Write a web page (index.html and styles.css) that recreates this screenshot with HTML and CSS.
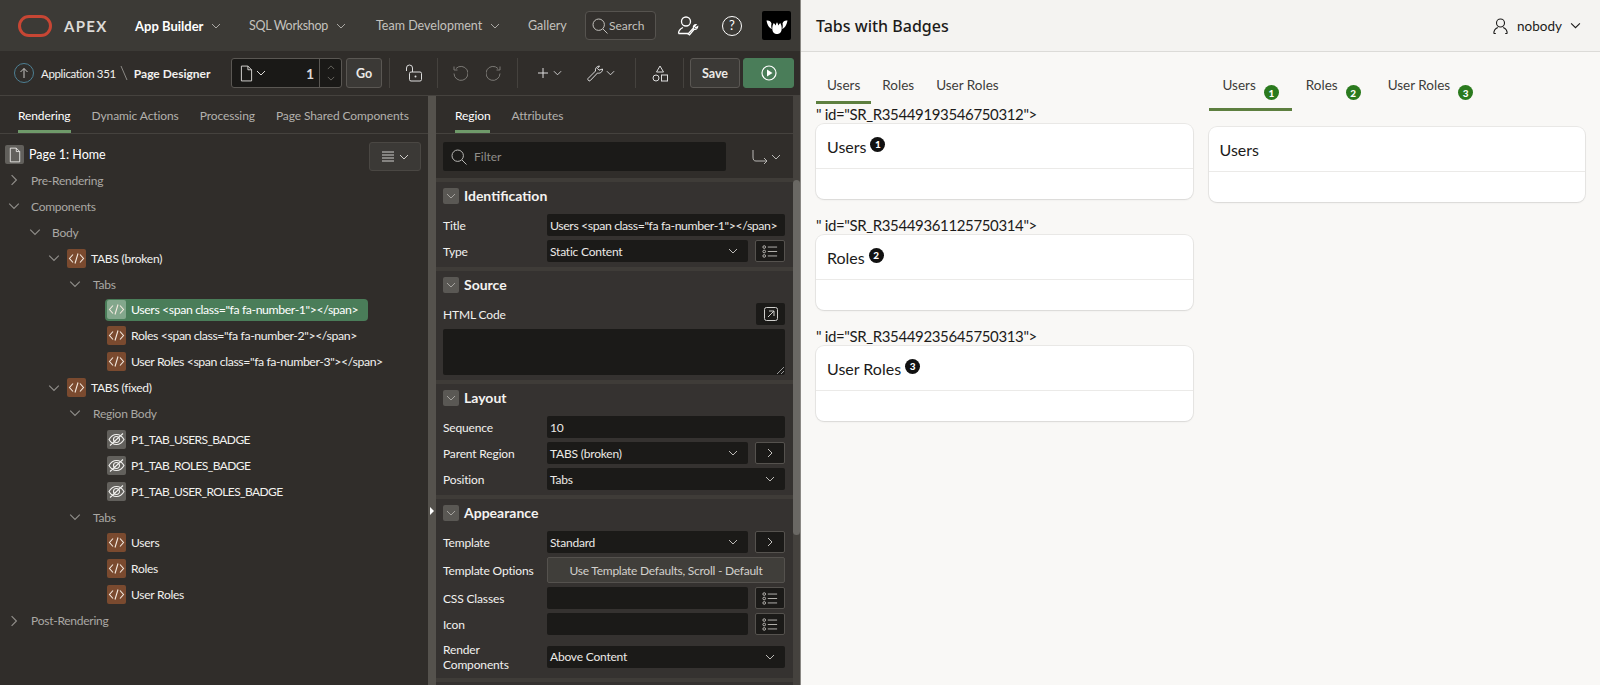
FILE: index.html
```html
<!DOCTYPE html>
<html lang="en">
<head>
<meta charset="utf-8">
<title>Tabs with Badges</title>
<link rel="stylesheet" href="styles.css">
</head>
<body>
<svg class="defs" width="0" height="0" aria-hidden="true">
  <symbol id="chev-d" viewBox="0 0 10 10"><path d="M1 3l4 4 4-4" fill="none" stroke="currentColor"/></symbol>
  <symbol id="chev-r" viewBox="0 0 10 10"><path d="M3 1l4 4-4 4" fill="none" stroke="currentColor"/></symbol>
  <symbol id="code" viewBox="0 0 19 19"><path d="M6 5.500L2.500 9.500 6 13.500M13 5.500l3.500 4-3.500 4M11 4.500L8 14.500" fill="none" stroke="currentColor" stroke-width="1.100"/></symbol>
  <symbol id="hidden" viewBox="0 0 19 19"><path d="M2 9.500c2-3.500 4.500-5 7.500-5s5.500 1.500 7.500 5c-2 3.500-4.500 5-7.500 5s-5.500-1.500-7.500-5zM6.500 9.500a3 3 0 0 0 6 0 3 3 0 0 0-6 0M3 15.500L16 3.500" fill="none" stroke="currentColor" stroke-width="1.100"/></symbol>
  <symbol id="list" viewBox="0 0 18 14"><circle cx="2.500" cy="2" r="1.500" fill="none" stroke="currentColor"/><circle cx="2.500" cy="7" r="1.500" fill="none" stroke="currentColor"/><circle cx="2.500" cy="12" r="1.500" fill="none" stroke="currentColor"/><path d="M6.500 2H17M6.500 7H17M6.500 12H17" stroke="currentColor"/></symbol>
  <symbol id="doc" viewBox="0 0 14 18"><path d="M1.500 1h7l4 4v12h-11zM8.500 1v4h4" fill="none" stroke="currentColor"/></symbol>
  <symbol id="search" viewBox="0 0 16 16"><circle cx="6.700" cy="6.700" r="5.700" fill="none" stroke="currentColor"/><path d="M11 11l4.500 4.500" stroke="currentColor"/></symbol>
</svg>

<div class="layout">
  <div class="builder">
    <header class="topbar">
      <svg class="oracle" width="34" height="22" viewBox="0 0 34 22"><rect x="1.500" y="1.500" width="31" height="19" rx="9.500" fill="none" stroke="#c74634" stroke-width="3"/></svg>
      <span class="apex">APEX</span>
      <nav class="nav">
        <a class="nav-item nav-app active">App Builder<svg class="nav-chev"><use href="#chev-d"/></svg></a>
        <a class="nav-item nav-sql">SQL Workshop<svg class="nav-chev"><use href="#chev-d"/></svg></a>
        <a class="nav-item nav-team">Team Development<svg class="nav-chev"><use href="#chev-d"/></svg></a>
        <a class="nav-item nav-gal">Gallery</a>
      </nav>
      <div class="search"><svg class="search-icon"><use href="#search"/></svg><span>Search</span></div>
      <svg class="admin-icon" width="22" height="22" viewBox="0 0 22 22"><circle cx="9" cy="6.500" r="4.500" fill="none" stroke="#fff" stroke-width="1.300"/><path d="M1.500 18.500c0-3.500 2.500-5 4.500-6M1.500 18.500h9.500" fill="none" stroke="#fff" stroke-width="1.300"/><path d="M11 19l5.500-6c-.6-1.800.6-3.500 2.500-3.500l-1.500 2 1.200 1.300 2-1.200c0 2-1.700 3.200-3.500 2.700l-4.700 5.700z" fill="none" stroke="#fff" stroke-width="1.200"/></svg>
      <div class="help">?</div>
      <div class="tenant"><svg width="22" height="18" viewBox="0 0 22 18"><path d="M11 17c-3 0-4.700-2.200-4.700-5.500 0-2 .5-4 1.500-5.500.8.700 1.500 1.500 1.900 2.500.2-1.200.6-2.300 1.300-3.200.7.900 1.100 2 1.300 3.200.4-1 1.100-1.800 1.900-2.500 1 1.500 1.500 3.500 1.500 5.500 0 3.300-1.700 5.500-4.700 5.500z" fill="#fff"/><path d="M.5 3.500C3 3 4.800 4.300 5.500 6.500c-.5 2-.3 4 .4 5.500C3 11 1.300 7.500.5 3.500zM21.500 3.500C19 3 17.200 4.300 16.500 6.500c.5 2 .3 4-.4 5.500 2.900-1 4.600-4.500 5.400-8.500z" fill="#fff"/></svg></div>
    </header>

    <div class="toolbar">
      <div class="crumbs">
        <span class="up"><svg width="12" height="12" viewBox="0 0 12 12"><path d="M6 11V1.500M2.500 5L6 1.500 9.500 5" fill="none" stroke="#c9c8c5"/></svg></span>
        <span class="crumb crumb-app">Application 351</span>
        <svg class="crumb-sep" width="8" height="16" viewBox="0 0 8 16"><path d="M1 1l6 14" stroke="#8a8884"/></svg>
        <strong class="crumb">Page Designer</strong>
      </div>
      <div class="page-sel">
        <svg class="ps-doc"><use href="#doc"/></svg>
        <svg class="ps-chev"><use href="#chev-d"/></svg>
        <span class="ps-num">1</span>
        <span class="ps-spin"><svg class="spin-i" viewBox="0 0 10 6"><path d="M1 5l4-4 4 4" fill="none" stroke="currentColor"/></svg><svg class="spin-i" viewBox="0 0 10 6"><path d="M1 1l4 4 4-4" fill="none" stroke="currentColor"/></svg></span>
      </div>
      <button class="btn go">Go</button>
      <i class="sep s7"></i>
      <svg class="tool ml15" width="17" height="18" viewBox="0 0 17 18"><path d="M1.500 7V4a3 3 0 0 1 6 0v4" fill="none" stroke="#ddd"/><rect x="4.500" y="8" width="12" height="9" rx="1.500" fill="none" stroke="#ddd"/><circle cx="10.500" cy="12.500" r="1" fill="#ddd"/></svg>
      <i class="sep ml15"></i>
      <svg class="tool ml15" width="15" height="16" viewBox="0 0 15 16"><path d="M3 3.500a7 7 0 1 1-2 5M1 1.500v3.500h3.500" fill="none" stroke="#7b7975"/></svg>
      <svg class="tool ml18" width="15" height="16" viewBox="0 0 15 16"><path d="M12 3.500a7 7 0 1 0 2 5M14 1.500v3.500h-3.500" fill="none" stroke="#7b7975"/></svg>
      <i class="sep ml16"></i>
      <svg class="tool ml20" width="10" height="10" viewBox="0 0 10 10"><path d="M5 0v10M0 5h10" stroke="#ddd"/></svg>
      <svg class="tool-chev ml5"><use href="#chev-d"/></svg>
      <svg class="tool ml25" width="17" height="17" viewBox="0 0 17 17"><path d="M1 13.500L8.500 6c-.6-2.500 1.200-5 4-5l-2 2.500 1.500 1.700L15.500 4c.3 2.800-2.500 4.800-5 4L3 15.800c-1 .8-2.800-1.200-2-2.300z" fill="none" stroke="#ddd"/></svg>
      <svg class="tool-chev ml2"><use href="#chev-d"/></svg>
      <i class="sep ml20"></i>
      <svg class="tool ml16" width="16" height="17" viewBox="0 0 16 17"><path d="M8 1l3.500 6h-7z" fill="none" stroke="#ddd"/><circle cx="4" cy="13" r="3" fill="none" stroke="#ddd"/><rect x="9.500" y="10" width="6" height="6" fill="none" stroke="#ddd"/></svg>
      <i class="sep ml15"></i>
      <button class="btn save">Save</button>
      <button class="btn run"><svg width="16" height="16" viewBox="0 0 16 16"><circle cx="8" cy="8" r="7" fill="none" stroke="#fff" stroke-width="1.200"/><path d="M6 4.500l5.500 3.500L6 11.500z" fill="#fff"/></svg></button>
    </div>

    <div class="panes">
      <section class="pane-left">
        <div class="ptabs ptabs-left">
          <span class="ptab on">Rendering</span>
          <span class="ptab">Dynamic Actions</span>
          <span class="ptab">Processing</span>
          <span class="ptab">Page Shared Components</span>
        </div>
        <div class="tree-wrap">
          <div class="tree-head">
            <span class="pg-icon"><svg class="pg-doc"><use href="#doc"/></svg></span>
            <span class="tree-page">Page 1: Home</span>
            <button class="tree-menu"><svg width="14" height="11" viewBox="0 0 14 11"><path d="M1 1h12M1 4h12M1 7h12M1 10h12" stroke="#d0cfcc"/></svg><svg class="menu-chev"><use href="#chev-d"/></svg></button>
          </div>
          <ul class="tree">
            <li class="row l0"><svg class="tw"><use href="#chev-r"/></svg><span class="mut">Pre-Rendering</span></li>
            <li class="row l0"><svg class="tw"><use href="#chev-d"/></svg><span class="mut">Components</span></li>
            <li class="row l1"><svg class="tw"><use href="#chev-d"/></svg><span class="mut">Body</span></li>
            <li class="row l2"><svg class="tw"><use href="#chev-d"/></svg><span class="ico code"><svg><use href="#code"/></svg></span><span>TABS (broken)</span></li>
            <li class="row l3"><svg class="tw"><use href="#chev-d"/></svg><span class="mut">Tabs</span></li>
            <li class="row l4"><span class="node sel"><span class="ico sel-ico"><svg><use href="#code"/></svg></span><span class="markup">Users &lt;span class="fa fa-number-1"&gt;&lt;/span&gt;</span></span></li>
            <li class="row l4"><span class="node"><span class="ico code"><svg><use href="#code"/></svg></span><span class="markup">Roles &lt;span class="fa fa-number-2"&gt;&lt;/span&gt;</span></span></li>
            <li class="row l4"><span class="node"><span class="ico code"><svg><use href="#code"/></svg></span><span class="markup">User Roles &lt;span class="fa fa-number-3"&gt;&lt;/span&gt;</span></span></li>
            <li class="row l2"><svg class="tw"><use href="#chev-d"/></svg><span class="ico code"><svg><use href="#code"/></svg></span><span>TABS (fixed)</span></li>
            <li class="row l3"><svg class="tw"><use href="#chev-d"/></svg><span class="mut">Region Body</span></li>
            <li class="row l4"><span class="node"><span class="ico hid"><svg><use href="#hidden"/></svg></span><span class="caps">P1_TAB_USERS_BADGE</span></span></li>
            <li class="row l4"><span class="node"><span class="ico hid"><svg><use href="#hidden"/></svg></span><span class="caps">P1_TAB_ROLES_BADGE</span></span></li>
            <li class="row l4"><span class="node"><span class="ico hid"><svg><use href="#hidden"/></svg></span><span class="caps">P1_TAB_USER_ROLES_BADGE</span></span></li>
            <li class="row l3"><svg class="tw"><use href="#chev-d"/></svg><span class="mut">Tabs</span></li>
            <li class="row l4"><span class="node"><span class="ico code"><svg><use href="#code"/></svg></span><span>Users</span></span></li>
            <li class="row l4"><span class="node"><span class="ico code"><svg><use href="#code"/></svg></span><span>Roles</span></span></li>
            <li class="row l4"><span class="node"><span class="ico code"><svg><use href="#code"/></svg></span><span>User Roles</span></span></li>
            <li class="row l0"><svg class="tw"><use href="#chev-r"/></svg><span class="mut">Post-Rendering</span></li>
          </ul>
        </div>
      </section>

      <div class="splitter"><i class="split-arrow"></i></div>

      <section class="pane-right">
        <div class="props">
          <div class="ptabs ptabs-right">
            <span class="ptab on">Region</span>
            <span class="ptab">Attributes</span>
          </div>
          <div class="filter-row">
            <div class="filter"><svg class="filter-icon"><use href="#search"/></svg><span>Filter</span></div>
            <svg class="goto" width="16" height="16" viewBox="0 0 16 16"><path d="M1 1v7c0 3 1 4 3 4h11M12 9l3 3-3 3" fill="none" stroke="#b9b8b5"/></svg>
            <svg class="goto-chev"><use href="#chev-d"/></svg>
          </div>

          <div class="group">
            <h3 class="group-head"><span class="coll"><svg><use href="#chev-d"/></svg></span>Identification</h3>
            <div class="group-body">
              <div class="prop"><label>Title</label><div class="field markup">Users &lt;span class="fa fa-number-1"&gt;&lt;/span&gt;</div></div>
              <div class="prop"><label>Type</label><div class="field sel-f">Static Content<svg class="dd"><use href="#chev-d"/></svg></div><span class="pick"><svg class="pick-i"><use href="#list"/></svg></span></div>
            </div>
          </div>

          <div class="group">
            <h3 class="group-head"><span class="coll"><svg><use href="#chev-d"/></svg></span>Source</h3>
            <div class="group-body">
              <div class="prop prop-code"><label>HTML Code</label><span class="expand"><svg width="14" height="14" viewBox="0 0 14 14"><rect x=".5" y=".5" width="13" height="13" rx="2" fill="none" stroke="#d0cfcc"/><path d="M4 10l6-6M5 4h5v5" fill="none" stroke="#d0cfcc"/></svg></span></div>
              <div class="textarea"><svg class="grip" width="7" height="7" viewBox="0 0 7 7"><path d="M0 7l7-7M4 7l3-3" stroke="#999"/></svg></div>
            </div>
          </div>

          <div class="group">
            <h3 class="group-head"><span class="coll"><svg><use href="#chev-d"/></svg></span>Layout</h3>
            <div class="group-body">
              <div class="prop"><label>Sequence</label><div class="field">10</div></div>
              <div class="prop"><label>Parent Region</label><div class="field sel-f">TABS (broken)<svg class="dd"><use href="#chev-d"/></svg></div><span class="pick"><svg class="pick-c"><use href="#chev-r"/></svg></span></div>
              <div class="prop"><label>Position</label><div class="field sel-f">Tabs<svg class="dd"><use href="#chev-d"/></svg></div></div>
            </div>
          </div>

          <div class="group">
            <h3 class="group-head"><span class="coll"><svg><use href="#chev-d"/></svg></span>Appearance</h3>
            <div class="group-body">
              <div class="prop"><label>Template</label><div class="field sel-f">Standard<svg class="dd"><use href="#chev-d"/></svg></div><span class="pick"><svg class="pick-c"><use href="#chev-r"/></svg></span></div>
              <div class="prop prop-opts"><label>Template Options</label><div class="opts">Use Template Defaults, Scroll - Default</div></div>
              <div class="prop"><label>CSS Classes</label><div class="field"></div><span class="pick"><svg class="pick-i"><use href="#list"/></svg></span></div>
              <div class="prop"><label>Icon</label><div class="field"></div><span class="pick"><svg class="pick-i"><use href="#list"/></svg></span></div>
              <div class="prop prop-two"><label>Render Components</label><div class="field sel-f">Above Content<svg class="dd"><use href="#chev-d"/></svg></div></div>
            </div>
          </div>
          <div class="group group-end"></div>
        </div>
        <div class="scrollbar"><i class="thumb"></i></div>
      </section>
    </div>
  </div>

  <div class="app">
    <header class="app-head">
      <h1>Tabs with Badges</h1>
      <div class="user">
        <svg width="15" height="16" viewBox="0 0 15 16"><circle cx="7.500" cy="5" r="4" fill="none" stroke="#1c1b1a" stroke-width="1.100"/><path d="M.8 15.500c0-3 1.500-5 4-6M14.200 15.500c0-3-1.500-5-4-6M.8 15.500h2M14.200 15.500h-2" fill="none" stroke="#1c1b1a" stroke-width="1.100"/></svg>
        <span>nobody</span>
        <svg class="user-chev"><use href="#chev-d"/></svg>
      </div>
    </header>
    <main class="app-body">
      <div class="col">
        <div class="tabs">
          <span class="tab on">Users</span>
          <span class="tab">Roles</span>
          <span class="tab">User Roles</span>
        </div>
        <div class="stray">" id="SR_R35449193546750312"&gt;</div>
        <article class="card">
          <div class="card-head"><h2>Users</h2><span class="num">1</span></div>
          <div class="card-body"></div>
        </article>
        <div class="stray">" id="SR_R35449361125750314"&gt;</div>
        <article class="card">
          <div class="card-head"><h2>Roles</h2><span class="num">2</span></div>
          <div class="card-body"></div>
        </article>
        <div class="stray">" id="SR_R35449235645750313"&gt;</div>
        <article class="card">
          <div class="card-head"><h2>User Roles</h2><span class="num">3</span></div>
          <div class="card-body"></div>
        </article>
      </div>
      <div class="col">
        <div class="tabs tabs-b">
          <span class="tab on">Users<span class="num green">1</span></span>
          <span class="tab">Roles<span class="num green">2</span></span>
          <span class="tab">User Roles<span class="num green">3</span></span>
        </div>
        <article class="card card-b">
          <div class="card-head"><h2>Users</h2></div>
          <div class="card-body"></div>
        </article>
      </div>
    </main>
  </div>
</div>
</body>
</html>
```

FILE: styles.css
```css
* { box-sizing: border-box; }
html, body { margin: 0; height: 100%; }
body { font-family: "Lato", "Noto Sans", sans-serif; font-size: 12px; background: #f9f8f6; overflow: hidden; }
.defs { position: absolute; }
h1, h2, h3, ul { margin: 0; padding: 0; font: inherit; list-style: none; }
button { font: inherit; }
svg { display: block; flex: none; }
i { display: block; }

.layout { display: flex; height: 685px; }
.builder { width: 801px; flex: none; display: flex; flex-direction: column; background: #302d2a; color: #f2f1ef; border-right: 1px solid #8a8884; overflow: hidden; }

/* top bar */
.topbar { height: 51px; flex: none; display: flex; align-items: center; padding-left: 18px; background: #3c3a36; }
.apex { margin-left: 12px; width: 71px; font-size: 15px; font-weight: 700; letter-spacing: 1.300px; color: #dcdad7; }
.nav { display: flex; }
.nav-item { display: flex; align-items: center; font-size: 12.500px; color: #c4c2be; }
.nav-app { width: 114px; font-size: 13px; } .nav-sql { width: 127px; letter-spacing: -.3px; } .nav-team { width: 152px; } .nav-gal { width: 57px; }
.nav-item.active { color: #fff; font-weight: 700; }
.nav-chev { width: 10px; height: 10px; margin-left: 8px; color: #aaa8a4; }
.search { width: 71px; height: 29px; display: flex; align-items: center; gap: 1px; padding-left: 6px; border: 1px solid #56534f; border-radius: 4px; background: #33302d; color: #c4c2be; }
.search-icon { width: 16px; height: 16px; color: #c4c2be; }
.admin-icon { margin-left: 21px; }
.help { width: 20px; height: 20px; margin-left: 23px; border: 1.200px solid #fff; border-radius: 50%; text-align: center; line-height: 17px; font-size: 13px; color: #fff; }
.tenant { width: 29px; height: 29px; margin-left: 20px; background: #000; border-radius: 2px; display: flex; align-items: center; justify-content: center; }
.oracle { flex: none; }

/* toolbar */
.toolbar { height: 45px; flex: none; display: flex; align-items: center; padding-left: 14px; background: #302d2a; border-bottom: 1px solid #45423e; }
.crumbs { width: 217px; flex: none; display: flex; align-items: center; }
.up { width: 20px; height: 20px; border: 1px solid #4d7f93; border-radius: 50%; display: flex; align-items: center; justify-content: center; margin-right: 7px; }
.crumb { font-size: 12px; color: #f2f1ef; }
.crumb-app { font-size: 11.500px; letter-spacing: -.35px; }
.crumb-sep { margin: 0 6px 0 4px; }
.page-sel { width: 111px; height: 30px; display: flex; align-items: center; background: #1a1917; border: 1px solid #5a5753; border-radius: 3px; padding-left: 8px; color: #dcdad7; position: relative; }
.ps-doc { width: 13px; height: 17px; }
.ps-chev { width: 10px; height: 10px; margin-left: 3px; }
.ps-num { flex: 1; text-align: right; font-size: 14px; font-weight: 700; padding-right: 3px; }
.ps-spin { width: 22px; height: 28px; border-left: 1px solid #5a5753; margin-left: 2px; display: flex; flex-direction: column; align-items: center; justify-content: center; gap: 6px; color: #77756f; }
.spin-i { width: 8px; height: 5px; }
.btn { height: 30px; border: 1px solid #5a5753; border-radius: 3px; background: #3b3936; color: #ece9e6; padding: 0; display: flex; align-items: center; justify-content: center; font-size: 12.500px; font-weight: 700; }
.go { width: 36px; margin-left: 4px; }
.save { width: 50px; margin-left: 6px; }
.run { width: 51px; margin-left: 3px; background: #4a7d59; border-color: #4a7d59; }
.sep { width: 1px; height: 30px; background: #45423e; flex: none; }
.s7 { margin-left: 7px; }
.ml2 { margin-left: 2px; } .ml5 { margin-left: 5px; } .ml15 { margin-left: 15px; } .ml16 { margin-left: 16px; } .ml18 { margin-left: 18px; } .ml20 { margin-left: 20px; } .ml25 { margin-left: 25px; }
.tool-chev { width: 9px; height: 10px; color: #ddd; }

/* panes */
.panes { flex: 1; display: flex; min-height: 0; }
.pane-left { width: 428px; flex: none; display: flex; flex-direction: column; }
.splitter { width: 8px; flex: none; background: #55524d; display: flex; align-items: flex-start; }
.split-arrow { width: 0; height: 0; margin-top: 411px; margin-left: 2px; border-left: 4px solid #fff; border-top: 4px solid transparent; border-bottom: 4px solid transparent; }
.pane-right { flex: 1; display: flex; min-width: 0; }
.props { flex: 1; min-width: 0; }
.scrollbar { width: 7px; flex: none; background: #45423e; padding-top: 84px; }
.thumb { height: 355px; background: #6a6864; border-radius: 4px; }

.ptabs { height: 38px; display: flex; gap: 21px; border-bottom: 1px solid #45423e; }
.ptabs-left { padding-left: 18px; }
.ptabs-right { padding-left: 19px; }
.ptab { height: 37px; padding-top: 11px; line-height: 18px; letter-spacing: -.1px; color: #b3b1ad; border-bottom: 3px solid transparent; white-space: nowrap; }
.ptab.on { color: #fff; border-bottom-color: #6f9a6a; }

/* tree */
.tree-wrap { padding: 8px 0 0; }
.tree-head { height: 29px; display: flex; align-items: center; padding-left: 5px; padding-right: 7px; }
.pg-icon { width: 19px; height: 19px; margin-top: -4px; background: #62605c; border-radius: 2px; display: flex; align-items: center; justify-content: center; color: #f2f1ef; }
.pg-doc { width: 12px; height: 16px; }
.tree-page { margin: -4px 0 0 5px; flex: 1; color: #fff; font-size: 12.500px; }
.tree-menu { width: 52px; height: 29px; background: #3b3936; border: 1px solid #4a4743; border-radius: 3px; display: flex; align-items: center; justify-content: center; gap: 4px; padding: 0; color: #d0cfcc; }
.menu-chev { width: 10px; height: 10px; }
.tree { margin-top: -3.500px; }
.row { height: 25.900px; display: flex; align-items: center; white-space: nowrap; letter-spacing: -.25px; color: #f2f1ef; }
.mut { color: #aaa8a4; }
.tw { width: 12px; height: 12px; color: #8f8d89; }
.l0 { padding-left: 8px; } .l0 .tw { margin-right: 11px; }
.l1 { padding-left: 29px; } .l1 .tw { margin-right: 11px; }
.l2 { padding-left: 48px; } .l2 .tw { margin-right: 7px; }
.l3 { padding-left: 69px; } .l3 .tw { margin-right: 12px; }
.l4 { padding-left: 105px; }
.ico { width: 19px; height: 19px; border-radius: 2px; margin-right: 5px; flex: none; }
.ico svg { width: 19px; height: 19px; color: #f4e9df; }
.code { background: #7a4a2f; }
.hid { background: #62605c; }
.hid svg { color: #f2f1ef; }
.node { display: inline-flex; align-items: center; height: 22px; padding: 0 8px 0 2px; border-radius: 4px; }
.sel { width: 263px; background: #4a7d59; color: #fff; }
.sel-ico { background: #83a78c; }
.markup { font-size: 12.300px; letter-spacing: -.4px; }
.caps { letter-spacing: -.6px; }

/* properties */
.filter-row { height: 44px; display: flex; align-items: flex-start; padding: 8px 0 0 7px; }
.filter { width: 283px; height: 29px; display: flex; align-items: center; gap: 7px; padding-left: 8px; background: #1b1a18; border-radius: 2px; color: #8f8d89; }
.filter-icon { width: 16px; height: 16px; color: #b9b8b5; }
.goto { margin: 7px 0 0 26px; }
.goto-chev { width: 10px; height: 10px; margin: 10px 0 0 3px; color: #b9b8b5; }

.group { background: #353230; border-top: 4px solid #3f3c38; }
.group-head { height: 27px; display: flex; align-items: center; padding-left: 7px; font-size: 14px; font-weight: 700; color: #f4f3f1; }
.coll { width: 16px; height: 16px; border-radius: 2px; background: #5a5854; margin-right: 5px; display: flex; align-items: center; justify-content: center; color: #a5a39f; }
.coll svg { width: 10px; height: 10px; }
.group-body { display: flex; flex-direction: column; gap: 4px; padding: 5px 8px 5px 7px; }
.prop { display: flex; align-items: center; }
.prop label { width: 104px; flex: none; color: #f2f1ef; line-height: 15px; letter-spacing: -.15px; }
.field { flex: 1; min-width: 0; height: 22px; display: flex; align-items: center; justify-content: space-between; padding: 0 4px 0 3px; background: #1b1a18; border-radius: 2px; color: #ece9e6; white-space: nowrap; overflow: hidden; letter-spacing: -.2px; }
.field.markup { letter-spacing: -.4px; }
.sel-f { padding-right: 10px; }
.dd { width: 10px; height: 10px; color: #bdbbb7; }
.pick { width: 30px; height: 22px; margin-left: 7px; flex: none; display: flex; align-items: center; justify-content: center; background: #1b1a18; border: 1px solid #55524e; border-radius: 2px; color: #c4c2be; }
.pick-i { width: 16px; height: 13px; }
.pick-c { width: 10px; height: 10px; }
.prop-code { justify-content: space-between; }
.expand { width: 29px; height: 22px; background: #1b1a18; border-radius: 2px; display: flex; align-items: center; justify-content: center; }
.textarea { height: 46px; background: #1b1a18; border-radius: 2px; display: flex; justify-content: flex-end; align-items: flex-end; padding: 0 1px 1px 0; }
.opts { flex: 1; height: 26px; display: flex; align-items: center; justify-content: center; background: #403e3a; border: 1px solid #55524e; border-radius: 2px; color: #d2d0cc; white-space: nowrap; letter-spacing: -.25px; }
.prop-two { margin-top: 1px; height: 33px; }
.group-end { height: 10px; }

/* app */
.app { flex: 1; min-width: 0; color: #1c1b1a; }
.app-head { height: 52px; display: flex; align-items: center; justify-content: space-between; padding: 0 19px 0 15px; background: #f4f3f1; border-bottom: 1px solid #dcdbd8; }
.app-head h1 { font-family: "Noto Sans", sans-serif; font-size: 16px; font-weight: 500; }
.user { display: flex; align-items: center; font-size: 13.500px; }
.user span { margin-left: 9px; }
.user-chev { width: 11px; height: 11px; margin-left: 8px; }
.app-body { display: flex; gap: 16px; padding: 15px 15px 0 15px; }
.col { flex: 1; min-width: 0; }
.tabs { display: flex; }
.tab { display: flex; align-items: flex-start; padding: 9px 11px 7px; line-height: 18px; font-size: 13.500px; color: #3d3c3a; border-bottom: 3px solid transparent; white-space: nowrap; }
.tab.on { border-bottom-color: #5d7f3f; }
.tabs-b .tab { padding: 9px 13px 8px 14px; }
.num { width: 15px; height: 15px; flex: none; display: inline-flex; align-items: center; justify-content: center; border-radius: 50%; background: #111; color: #fff; font-size: 10px; font-weight: 900; line-height: 1; margin: -5px 0 0 4px; }
.green { background: #2b7a1e; margin: 9px 0 0 8px; }
.stray { height: 20px; line-height: 20px; font-size: 15px; letter-spacing: -.37px; color: #1c1b1a; white-space: nowrap; }
.card { height: 75px; margin-bottom: 16px; background: #fff; border-radius: 8px; box-shadow: 0 0 0 1px rgba(0,0,0,.06), 0 1px 2px rgba(0,0,0,.08); overflow: hidden; }
.card-b { margin-top: 16px; }
.card-head { height: 45px; display: flex; align-items: center; padding: 1px 11px 0; border-bottom: 1px solid #ebeae8; }
.card-head h2 { font-size: 16px; font-weight: 400; }
```
